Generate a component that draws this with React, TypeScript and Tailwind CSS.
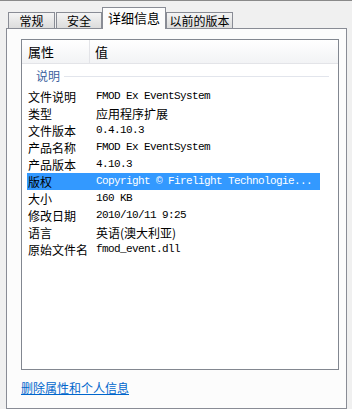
const cjk = "font-['Microsoft_YaHei','Noto_Sans_CJK_SC',sans-serif]";
const mono = "font-['Liberation_Mono','Noto_Sans_CJK_SC',monospace]";

const rows = [
  { label: "文件说明", value: "FMOD Ex EventSystem", mono: true },
  { label: "类型", value: "应用程序扩展", mono: false },
  { label: "文件版本", value: "0.4.10.3", mono: true },
  { label: "产品名称", value: "FMOD Ex EventSystem", mono: true },
  { label: "产品版本", value: "4.10.3", mono: true },
  { label: "版权", value: "Copyright © Firelight Technologie...", mono: true, selected: true },
  { label: "大小", value: "160 KB", mono: true },
  { label: "修改日期", value: "2010/10/11 9:25", mono: true },
  { label: "语言", value: "英语(澳大利亚)", mono: false },
  { label: "原始文件名", value: "fmod_event.dll", mono: true },
];

function Tab({ label, width, active }: { label: string; width: string; active?: boolean }) {
  if (active) {
    return (
      <div
        className={`${width} h-[22px] -mb-px relative z-10 bg-[#fcfcfc] border border-b-0 border-[#898c95] flex items-start justify-center pt-[2px] text-[13px] leading-[16px] text-black`}
      >
        {label}
      </div>
    );
  }
  return (
    <div
      className={`${width} h-[16px] bg-gradient-to-b from-[#f4f4f4] to-[#dcdcdc] border border-b-0 border-[#898c95] flex items-center justify-center text-[12px] leading-[14px] text-black`}
    >
      {label}
    </div>
  );
}

export default function App() {
  return (
    <div className={`w-[352px] h-[409px] bg-[#f0f0f0] border-t border-[#8a8a8a] ${cjk} overflow-hidden`}>
      <div className="h-[27px] flex items-end pl-[8px]">
        <Tab label="常规" width="w-[47px]" />
        <div className="w-[1px]" />
        <Tab label="安全" width="w-[46px]" />
        <Tab label="详细信息" width="w-[64px]" active />
        <Tab label="以前的版本" width="w-[67px]" />
      </div>

      <div className="ml-[6px] w-[341px] h-[381px] bg-[#fcfcfc] border border-[#898c95] pl-[14px] pt-[10px]">
        <div className="w-[318px] h-[331px] bg-white border border-[#828790]">
          <div className="h-[24px] flex items-center bg-gradient-to-b from-white to-[#f2f3f5] border-b border-[#e3e4e8] text-[13px] text-black">
            <div className="w-[68px] h-full pl-[6px] flex items-center border-r border-[#e3e4e8]">属性</div>
            <div className="pl-[5px]">值</div>
          </div>

          <div className="h-[24px] flex items-center pl-[14px] pr-[9px] gap-[4px]">
            <span className="text-[12px] text-[#3c5fa0]">说明</span>
            <div className="flex-1 h-px bg-[#e2e5ec]" />
          </div>

          {rows.map((r) => (
            <div
              key={r.label}
              className={`h-[17px] ml-[5px] w-[293px] flex items-center ${r.selected ? "bg-[#3399ff]" : ""} text-black`}
            >
              <div className="w-[69px] pl-[1px] text-[12px] leading-[17px] shrink-0">{r.label}</div>
              <div
                className={`${r.mono ? `${mono} text-[11px] tracking-[-0.6px]` : "text-[12px]"} ${r.selected ? "text-white" : ""} leading-[17px] whitespace-nowrap`}
              >
                {r.value}
              </div>
            </div>
          ))}
        </div>

        <div className="mt-[10px] text-[12px] leading-[16px] text-[#0066cc] underline">删除属性和个人信息</div>
      </div>
    </div>
  );
}
